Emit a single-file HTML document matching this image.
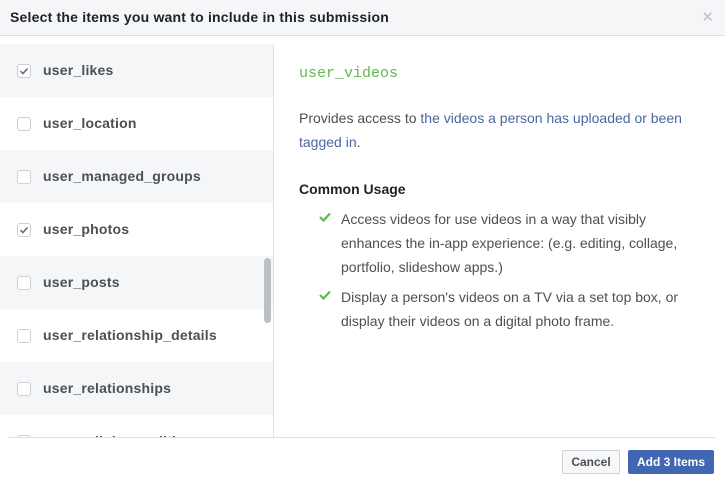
<!DOCTYPE html>
<html><head><style>
*{margin:0;padding:0;box-sizing:border-box}
body{width:725px;height:482px;overflow:hidden;background:#fff;font-family:"Liberation Sans",Arial,sans-serif;position:relative}
.hdr{position:absolute;left:0;top:0;width:725px;height:36px;background:#f5f6f7;border-bottom:1px solid #dddfe2}
.hdr .t{position:absolute;left:10px;top:9px;font-size:14px;font-weight:bold;color:#1d2129;letter-spacing:0.2px}
.hdr .x{position:absolute;right:11px;top:8px;font-size:15px;color:#bec2c9}
.left{position:absolute;left:0;top:44px;width:274px;height:393px;overflow:hidden;border-right:1px solid #dddfe2}
.row{height:53px;position:relative}
.row.g{background:#f5f6f7}
.cb{position:absolute;left:17px;top:20px;width:14px;height:14px;border:1px solid #ccd0d5;border-radius:3px;background:#fff}
.cb svg{position:absolute;left:1px;top:1px}
.row span{position:absolute;left:43px;top:18px;font-size:14px;font-weight:bold;color:#4b4f56;letter-spacing:0.2px}
.sb{position:absolute;left:264px;top:258px;width:7px;height:65px;background:#bcc0c4;border-radius:4px}
.code{position:absolute;left:299px;top:65px;font-family:"Liberation Mono",monospace;font-size:15px;color:#5cba4a}
.desc{position:absolute;left:299px;top:106px;width:400px;font-size:14px;line-height:24px;color:#4b4f56}
.desc a{color:#4b67a1;text-decoration:none}
.cu{position:absolute;left:299px;top:181px;font-size:14px;font-weight:bold;color:#1d2129}
.li{position:absolute;left:341px;width:360px;font-size:14px;line-height:24px;color:#4b4f56}
.ck{position:absolute;left:319px}
.foot{position:absolute;left:9px;top:437px;width:706px;border-top:1px solid #dddfe2}
.btn{position:absolute;top:450px;height:24px;font-size:12px;font-weight:bold;border-radius:2px;line-height:22px;text-align:center}
.cancel{left:562px;width:58px;background:#f6f7f9;border:1px solid #ced0d4;color:#4b4f56}
.add{left:628px;width:86px;background:#4267b2;border:1px solid #4267b2;color:#fff}
</style></head><body>
<div class="hdr"><div class="t">Select the items you want to include in this submission</div><div class="x">✕</div></div>
<div class="left">
<div class="row g"><div class="cb"><svg width="10" height="10" viewBox="0 0 10 10"><path d="M1.5 5.2L4 7.5L8.5 2.5" stroke="#606770" stroke-width="1.5" fill="none"/></svg></div><span>user_likes</span></div>
<div class="row"><div class="cb"></div><span>user_location</span></div>
<div class="row g"><div class="cb"></div><span>user_managed_groups</span></div>
<div class="row"><div class="cb"><svg width="10" height="10" viewBox="0 0 10 10"><path d="M1.5 5.2L4 7.5L8.5 2.5" stroke="#606770" stroke-width="1.5" fill="none"/></svg></div><span>user_photos</span></div>
<div class="row g"><div class="cb"></div><span>user_posts</span></div>
<div class="row"><div class="cb"></div><span>user_relationship_details</span></div>
<div class="row g"><div class="cb"></div><span>user_relationships</span></div>
<div class="row"><div class="cb"></div><span>user_religion_politics</span></div>
</div>
<div class="sb"></div>
<div class="code">user_videos</div>
<div class="desc">Provides access to <a>the videos a person has uploaded or been tagged in</a>.</div>
<div class="cu">Common Usage</div>
<svg class="ck" style="top:212px" width="12" height="10" viewBox="0 0 12 10"><path d="M1 5L4.5 8.5L11 1.5" stroke="#5cba4a" stroke-width="2.2" fill="none"/></svg>
<div class="li" style="top:207px">Access videos for use videos in a way that visibly<br>enhances the in-app experience: (e.g. editing, collage,<br>portfolio, slideshow apps.)</div>
<svg class="ck" style="top:290px" width="12" height="10" viewBox="0 0 12 10"><path d="M1 5L4.5 8.5L11 1.5" stroke="#5cba4a" stroke-width="2.2" fill="none"/></svg>
<div class="li" style="top:285px">Display a person's videos on a TV via a set top box, or<br>display their videos on a digital photo frame.</div>
<div class="foot"></div>
<div class="btn cancel">Cancel</div>
<div class="btn add">Add 3 Items</div>
</body></html>
